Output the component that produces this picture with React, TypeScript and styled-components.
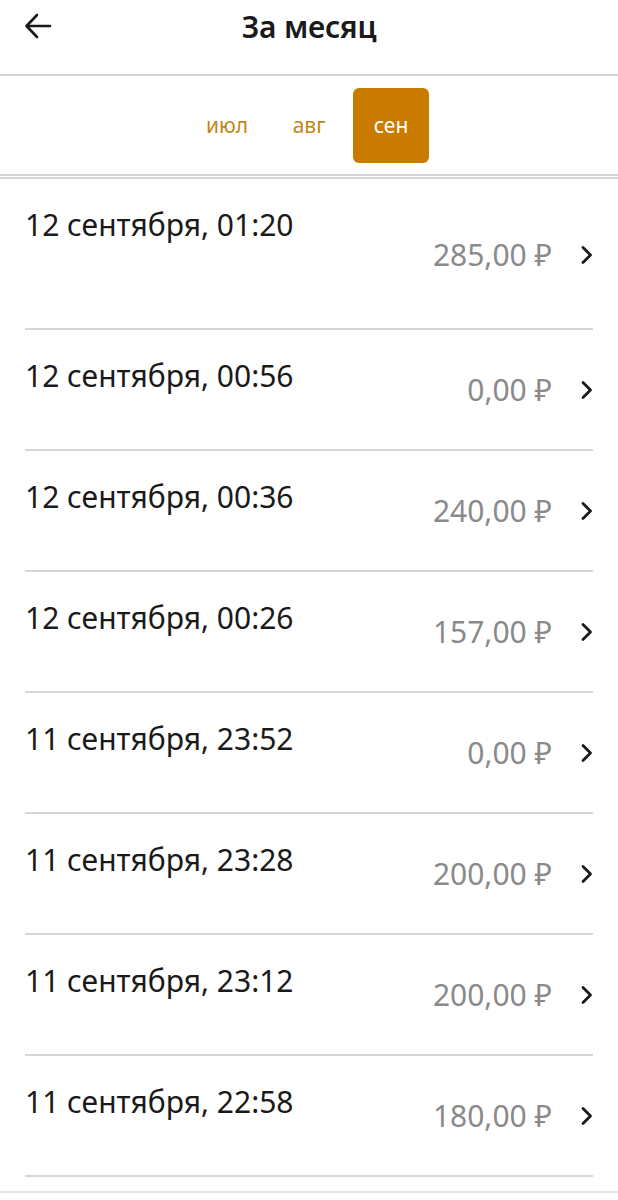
import { ReactElement } from 'react';
import styled, { createGlobalStyle } from 'styled-components';

const GlobalStyle = createGlobalStyle`
  html, body {
    margin: 0;
    padding: 0;
    background: #ffffff;
  }
  body {
    font-family: 'Noto Sans', 'Open Sans', sans-serif;
    color: #1a1a1a;
  }
`;

const LINE = '#d6d6d2';

type Payment = {
  date: string;
  amount: string;
};

const PAYMENTS: Payment[] = [
  { date: '12 сентября, 01:20', amount: '285,00 ₽' },
  { date: '12 сентября, 00:56', amount: '0,00 ₽' },
  { date: '12 сентября, 00:36', amount: '240,00 ₽' },
  { date: '12 сентября, 00:26', amount: '157,00 ₽' },
  { date: '11 сентября, 23:52', amount: '0,00 ₽' },
  { date: '11 сентября, 23:28', amount: '200,00 ₽' },
  { date: '11 сентября, 23:12', amount: '200,00 ₽' },
  { date: '11 сентября, 22:58', amount: '180,00 ₽' },
];

const MONTHS = ['июл', 'авг', 'сен'];

const Screen = styled.div`
  width: 618px;
  min-height: 1200px;
  display: flex;
  flex-direction: column;
  background: #fff;
`;

const Header = styled.header`
  position: relative;
  height: 76px;
  display: flex;
  justify-content: center;
  align-items: flex-start;
  padding-top: 6px;
  box-sizing: border-box;
  border-bottom: 2px solid ${LINE};
`;

const BackButton = styled.button`
  position: absolute;
  left: 22px;
  top: 10px;
  width: 32px;
  height: 32px;
  padding: 0;
  border: none;
  background: none;
  display: flex;
  align-items: center;
  justify-content: center;
  cursor: pointer;
`;

const Title = styled.h1`
  margin: 0;
  font-size: 30px;
  line-height: 42px;
  font-weight: 600;
  color: #1a1a1a;
  letter-spacing: -0.2px;
`;

const Tabs = styled.nav`
  height: 100px;
  display: flex;
  justify-content: center;
  align-items: center;
  gap: 6px;
  box-sizing: border-box;
  border-bottom: 2px solid ${LINE};
`;

const Tab = styled.button<{ $active?: boolean }>`
  width: 76px;
  height: 75px;
  border: none;
  border-radius: 6px;
  padding: 0;
  font-family: inherit;
  font-size: 21px;
  background: ${({ $active }) => ($active ? '#c97b00' : 'transparent')};
  color: ${({ $active }) => ($active ? '#ffffff' : '#c08716')};
  cursor: pointer;
`;

const List = styled.ul`
  list-style: none;
  margin: 1px 0 0;
  padding: 0 25px;
  border-top: 2px solid ${LINE};
`;

const Row = styled.li<{ $tall?: boolean }>`
  height: ${({ $tall }) => ($tall ? '149px' : '119px')};
  display: flex;
  justify-content: space-between;
  align-items: flex-start;
  border-bottom: 2px solid ${LINE};
`;

const DateText = styled.div`
  padding-top: 26px;
  font-size: 30px;
  line-height: 40px;
  color: #1a1a1a;
`;

const Side = styled.div<{ $tall?: boolean }>`
  display: flex;
  align-items: center;
  gap: 27px;
  padding-top: ${({ $tall }) => ($tall ? '56px' : '40px')};
`;

const Amount = styled.span`
  font-size: 30px;
  line-height: 40px;
  color: #8a8a8a;
`;

const Footer = styled.div`
  margin-top: 14px;
  border-top: 2px solid #e6e6e4;
`;

const ArrowLeft = (): ReactElement => (
  <svg width="30" height="30" viewBox="0 0 30 30" fill="none">
    <path
      d="M27 15H4M14 4L3.5 15L14 26"
      stroke="#1a1a1a"
      strokeWidth="2.6"
      strokeLinecap="round"
      strokeLinejoin="round"
    />
  </svg>
);

const Chevron = (): ReactElement => (
  <svg width="14" height="20" viewBox="0 0 14 20" fill="none">
    <path
      d="M4 2.5L11.5 10L4 17.5"
      stroke="#1a1a1a"
      strokeWidth="2.8"
      strokeLinecap="round"
      strokeLinejoin="round"
    />
  </svg>
);

const App = (): ReactElement => (
  <Screen>
    <GlobalStyle />
    <Header>
      <BackButton aria-label={'Назад'}>
        <ArrowLeft />
      </BackButton>
      <Title>За месяц</Title>
    </Header>
    <Tabs>
      {MONTHS.map((month) => (
        <Tab key={month} $active={month === 'сен'}>
          {month}
        </Tab>
      ))}
    </Tabs>
    <List>
      {PAYMENTS.map((payment, i) => (
        <Row key={payment.date} $tall={i === 0}>
          <DateText>{payment.date}</DateText>
          <Side $tall={i === 0}>
            <Amount>{payment.amount}</Amount>
            <Chevron />
          </Side>
        </Row>
      ))}
    </List>
    <Footer />
  </Screen>
);

export default App;
